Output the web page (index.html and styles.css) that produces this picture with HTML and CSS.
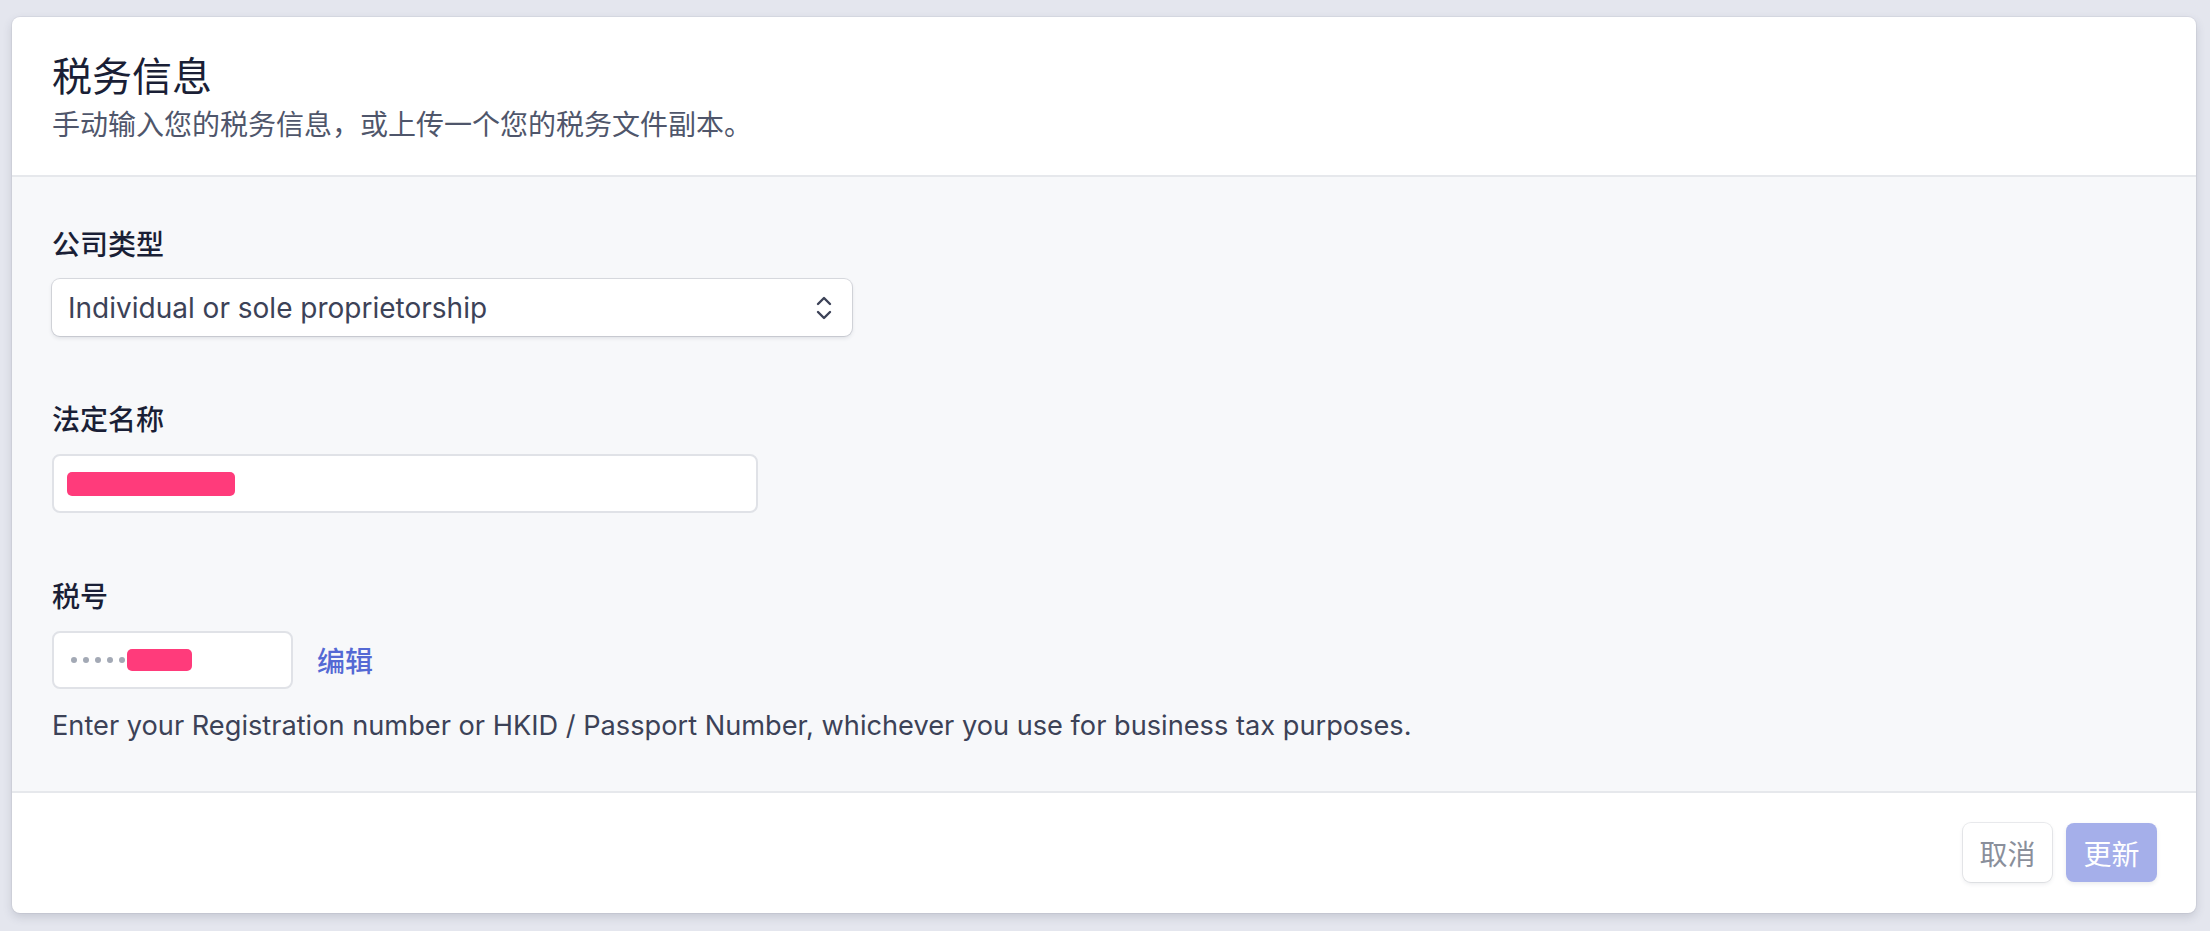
FILE: index.html
```html
<!DOCTYPE html>
<html lang="zh-CN">
<head>
    <meta charset="UTF-8">
    <meta name="viewport" content="width=device-width, initial-scale=1.0">
    <title>税务信息</title>
    <link rel="stylesheet" href="styles.css">
</head>
<body>
    <div class="card">
        <div class="card-header">
            <h1>税务信息</h1>
            <p>手动输入您的税务信息，或上传一个您的税务文件副本。</p>
        </div>

        <div class="card-body">
            <div class="field">
                <label>公司类型</label>
                <div class="select">
                    <span>Individual or sole proprietorship</span>
                    <svg width="16" height="24" viewBox="0 0 16 24" fill="none" stroke="#3c4257" stroke-width="2.4" stroke-linecap="round" stroke-linejoin="round">
                        <polyline points="2,8 8,2 14,8"/>
                        <polyline points="2,16 8,22 14,16"/>
                    </svg>
                </div>
            </div>

            <div class="field">
                <label>法定名称</label>
                <div class="input input-name">
                    <span class="redact redact-name"></span>
                </div>
            </div>

            <div class="field">
                <label>税号</label>
                <div class="tax-row">
                    <div class="input input-tax">
                        <span class="dots">
                            <i></i><i></i><i></i><i></i><i></i>
                        </span>
                        <span class="redact redact-tax"></span>
                    </div>
                    <a class="edit-link" href="#">编辑</a>
                </div>
                <p class="help">Enter your Registration number or HKID / Passport Number, whichever you use for business tax purposes.</p>
            </div>
        </div>

        <div class="card-footer">
            <button class="btn btn-cancel">取消</button>
            <button class="btn btn-update">更新</button>
        </div>
    </div>
</body>
</html>
```

FILE: styles.css
```css
html, body {
    margin: 0;
    padding: 0;
    height: 100%;
}

body {
    background: #e4e6ee;
    padding: 17px 14px 18px 12px;
    box-sizing: border-box;
    font-family: "Inter", "Noto Sans CJK SC", sans-serif;
    color: #1a1f36;
}

.card {
    background: #fff;
    border-radius: 8px;
    height: 896px;
    overflow: hidden;
    display: flex;
    flex-direction: column;
    box-shadow: 0 0 0 1px rgba(60, 66, 87, 0.06), 0 4px 10px rgba(60, 66, 87, 0.18);
}

/* header */
.card-header {
    padding: 36px 40px 30px;
    border-bottom: 2px solid #e6e8ec;
}

.card-header h1 {
    margin: 0;
    font-size: 40px;
    line-height: 48px;
    font-weight: 400;
    color: #1a1f36;
}

.card-header p {
    margin: 4px 0 0;
    font-size: 28px;
    line-height: 40px;
    color: #4f566b;
}

/* body */
.card-body {
    flex: 1;
    background: #f7f8fa;
    padding: 48px 40px 0;
    display: flex;
    flex-direction: column;
    gap: 64px;
}

.field label {
    display: block;
    font-size: 28px;
    line-height: 40px;
    font-weight: 500;
    color: #1a1f36;
    margin-bottom: 14px;
}

.select {
    width: 800px;
    height: 57px;
    box-sizing: border-box;
    background: #fff;
    border-radius: 8px;
    padding: 0 20px 0 16px;
    display: flex;
    align-items: center;
    justify-content: space-between;
    font-size: 28px;
    color: #3c4257;
    box-shadow: 0 0 0 1px rgba(60, 66, 87, 0.16), 0 2px 4px rgba(60, 66, 87, 0.14);
}

.input {
    height: 59px;
    box-sizing: border-box;
    background: #fff;
    border: 2px solid #e0e2e7;
    border-radius: 8px;
    display: flex;
    align-items: center;
}

.input-name {
    width: 706px;
    padding-left: 13px;
}

.redact {
    display: block;
    background: #ff3b7b;
    border-radius: 5px;
    height: 24px;
}

.redact-name {
    width: 168px;
}

.tax-row {
    display: flex;
    align-items: center;
    gap: 24px;
}

.input-tax {
    width: 241px;
    height: 58px;
    padding-left: 17px;
}

.dots {
    display: flex;
    gap: 6px;
    margin-right: 2px;
}

.dots i {
    width: 6px;
    height: 6px;
    border-radius: 50%;
    background: #a3a9b5;
}

.redact-tax {
    width: 65px;
    height: 22px;
}

.edit-link {
    font-size: 28px;
    font-weight: 500;
    color: #5469d4;
    text-decoration: none;
}

.help {
    margin: 17px 0 0;
    font-size: 27.2px;
    line-height: 40px;
    color: #3c4257;
}

/* footer */
.card-footer {
    height: 122px;
    box-sizing: border-box;
    border-top: 2px solid #e6e8ec;
    padding: 30px 39px 0;
    display: flex;
    justify-content: flex-end;
    align-items: flex-start;
    gap: 14px;
}

.btn {
    height: 59px;
    border: none;
    border-radius: 8px;
    font-family: inherit;
    font-size: 28px;
    padding: 0 16px;
}

.btn-cancel {
    width: 89px;
    background: #fff;
    color: #8a8f9b;
    box-shadow: 0 0 0 1px rgba(60, 66, 87, 0.1), 0 2px 4px rgba(60, 66, 87, 0.1);
}

.btn-update {
    width: 91px;
    background: #a5afea;
    color: #fff;
    box-shadow: 0 2px 4px rgba(60, 66, 87, 0.1);
}
```
